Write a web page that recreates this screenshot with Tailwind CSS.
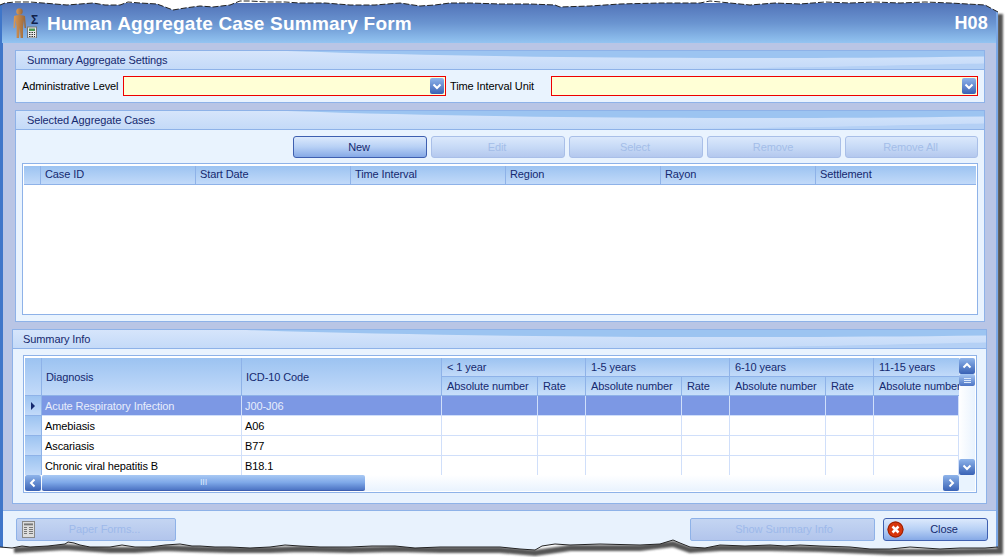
<!DOCTYPE html>
<html lang="en">
<head>
  <meta charset="UTF-8" />
  <title>Human Aggregate Case Summary Form</title>
  <script src="https://cdn.jsdelivr.net/npm/@tailwindcss/browser@4"></script>
</head>
<body class="bg-white overflow-hidden font-['Liberation_Sans',sans-serif] text-[11px] leading-none tracking-[-0.1px]">
<div class="relative w-[1006px] h-[557px] overflow-hidden bg-white pt-[3px]">

  <!-- window -->
  <div class="w-[998px] h-[549px] flex flex-col bg-[#b9c5e5] border-l-[3px] border-l-[#3f76c9] border-r-2 border-r-[#7ba8e6]">

    <!-- title bar -->
    <div class="h-[40px] shrink-0 -ml-px flex items-center justify-between bg-gradient-to-b from-[#5273b8] via-[#6a94d0] to-[#93c4f1] pr-[8px]">
      <div class="flex items-center">
        <svg width="30" height="32" viewBox="0 0 30 32" class="ml-[10px] -mt-[2px] shrink-0">
          <defs><linearGradient id="skin" x1="0" x2="1" y1="0" y2="0"><stop offset="0" stop-color="#dc9a55"/><stop offset="1" stop-color="#96653a"/></linearGradient></defs>
          <circle cx="7.500" cy="5.500" r="3.200" fill="url(#skin)"/>
          <path d="M2 10 Q7.500 8 13 10 L14 22 L12.500 22 L12 14 L11 21 L11 32 L8.600 32 L7.800 22 L7 32 L4.600 32 L4.600 21 L3.600 14 L3 22 L1.500 22 Z" fill="url(#skin)"/>
          <rect x="15.500" y="21" width="9" height="11" fill="#e8e8e8" stroke="#777"/>
          <rect x="17" y="22.500" width="6" height="2.500" fill="#4b9a55"/>
          <path d="M17 26.500h1.500M19.500 26.500h1.500M22 26.500h1M17 28.500h1.500M19.500 28.500h1.500M22 28.500h1M17 30.500h1.500M19.500 30.500h1.500M22 30.500h1" stroke="#333" stroke-width="1"/>
        </svg>
        <span class="-ml-[11px] -mt-[6px] w-[9px] text-[12px] font-bold text-[#10204a]">Σ</span>
        <span class="ml-[7px] text-[19px] font-bold text-white tracking-[0.2px]">Human Aggregate Case Summary Form</span>
      </div>
      <span class="text-[18px] font-bold text-white tracking-[0.2px]">H08</span>
    </div>

    <!-- panels -->
    <div class="flex-1 flex flex-col pt-[7px]">

      <!-- Summary Aggregate Settings -->
      <section class="ml-[12px] w-[970px] h-[53px] border border-[#8eb2e8] bg-[#e9f3fe]">
        <div class="relative h-[19px] border-b border-[#8eb2e8] bg-gradient-to-b from-[#d6e5fb] to-[#c4daf8] flex items-center pl-[11px] text-[#15296f] overflow-hidden">
          <svg class="absolute inset-0 w-full h-full" viewBox="0 0 100 20" preserveAspectRatio="none"><path d="M28 0 C48 7 70 10 100 6 L100 0 Z" fill="#9cc4f1"/><path d="M70 20 C85 18 95 15 100 14 L100 20 Z" fill="#b4d0f5"/></svg>
          <span class="relative">Summary Aggregate Settings</span>
        </div>
        <div class="h-[32px] flex items-center pl-[6px]">
          <span class="w-[101px] shrink-0 pt-px text-black">Administrative Level</span>
          <div class="w-[323px] h-[20px] border border-[#ee0000] bg-[#ffffd6] flex items-center justify-end pr-px">
            <svg width="14" height="16" viewBox="0 0 14 16"><defs><linearGradient id="dd" x1="0" x2="0" y1="0" y2="1"><stop offset="0" stop-color="#8fb4ea"/><stop offset="1" stop-color="#3a62b5"/></linearGradient></defs><rect width="14" height="16" rx="2" fill="url(#dd)"/><path d="M3.500 6.500L7 10L10.500 6.500" fill="none" stroke="#fff" stroke-width="2"/></svg>
          </div>
          <span class="w-[101px] shrink-0 ml-[4px] pt-px text-black">Time Interval Unit</span>
          <div class="w-[427px] h-[20px] border border-[#ee0000] bg-[#ffffd6] flex items-center justify-end pr-px">
            <svg width="14" height="16" viewBox="0 0 14 16"><rect width="14" height="16" rx="2" fill="url(#dd)"/><path d="M3.500 6.500L7 10L10.500 6.500" fill="none" stroke="#fff" stroke-width="2"/></svg>
          </div>
        </div>
      </section>

      <!-- Selected Aggregate Cases -->
      <section class="ml-[12px] mt-[7px] w-[970px] h-[212px] border border-[#8eb2e8] bg-[#e9f3fe]">
        <div class="relative h-[19px] border-b border-[#8eb2e8] bg-gradient-to-b from-[#d6e5fb] to-[#c4daf8] flex items-center pl-[11px] text-[#15296f] overflow-hidden">
          <svg class="absolute inset-0 w-full h-full" viewBox="0 0 100 20" preserveAspectRatio="none"><path d="M28 0 C48 7 70 10 100 6 L100 0 Z" fill="#9cc4f1"/><path d="M70 20 C85 18 95 15 100 14 L100 20 Z" fill="#b4d0f5"/></svg>
          <span class="relative">Selected Aggregate Cases</span>
        </div>
        <div class="flex justify-end gap-[4px] pt-[6px] pr-[6px]">
          <button class="w-[134px] h-[22px] pr-[2px] rounded-[3px] border border-[#3e5fb0] bg-gradient-to-b from-[#dce9fc] via-[#b7d0f5] to-[#86a9e6] text-[#15296f]">New</button>
          <button class="w-[134px] h-[22px] pr-[2px] rounded-[3px] border border-[#a9bfe8] bg-gradient-to-b from-[#dbe8fb] via-[#c7daf6] to-[#b4c8ee] text-[#a3bde8]">Edit</button>
          <button class="w-[134px] h-[22px] pr-[2px] rounded-[3px] border border-[#a9bfe8] bg-gradient-to-b from-[#dbe8fb] via-[#c7daf6] to-[#b4c8ee] text-[#a3bde8]">Select</button>
          <button class="w-[134px] h-[22px] pr-[2px] rounded-[3px] border border-[#a9bfe8] bg-gradient-to-b from-[#dbe8fb] via-[#c7daf6] to-[#b4c8ee] text-[#a3bde8]">Remove</button>
          <button class="w-[133px] h-[22px] pr-[2px] rounded-[3px] border border-[#a9bfe8] bg-gradient-to-b from-[#dbe8fb] via-[#c7daf6] to-[#b4c8ee] text-[#a3bde8]">Remove All</button>
        </div>
        <div class="ml-[6px] mt-[5px] w-[956px] h-[152px] border border-[#8eb2e8] bg-white p-px pt-[2px]">
          <div class="grid grid-cols-[17px_155px_155px_155px_155px_155px_160px] h-[19px] text-[#15296f] border-b border-[#8eb2e8]">
            <div class="bg-gradient-to-b from-[#9cc3f1] to-[#c2daf9] border-r border-[#8eb2e8]"></div>
            <div class="bg-gradient-to-b from-[#9cc3f1] to-[#c2daf9] border-r border-[#8eb2e8] pl-[4px] pb-px flex items-center">Case ID</div>
            <div class="bg-gradient-to-b from-[#9cc3f1] to-[#c2daf9] border-r border-[#8eb2e8] pl-[4px] pb-px flex items-center">Start Date</div>
            <div class="bg-gradient-to-b from-[#9cc3f1] to-[#c2daf9] border-r border-[#8eb2e8] pl-[4px] pb-px flex items-center">Time Interval</div>
            <div class="bg-gradient-to-b from-[#9cc3f1] to-[#c2daf9] border-r border-[#8eb2e8] pl-[4px] pb-px flex items-center">Region</div>
            <div class="bg-gradient-to-b from-[#9cc3f1] to-[#c2daf9] border-r border-[#8eb2e8] pl-[4px] pb-px flex items-center">Rayon</div>
            <div class="bg-gradient-to-b from-[#9cc3f1] to-[#c2daf9] pl-[4px] pb-px flex items-center">Settlement</div>
          </div>
        </div>
      </section>

      <!-- Summary Info -->
      <section class="ml-[9px] mt-[7px] w-[975px] h-[175px] border border-[#8eb2e8] bg-[#e9f3fe]">
        <div class="relative h-[19px] border-b border-[#8eb2e8] bg-gradient-to-b from-[#d6e5fb] to-[#c4daf8] flex items-center pl-[10px] text-[#15296f] overflow-hidden">
          <svg class="absolute inset-0 w-full h-full" viewBox="0 0 100 20" preserveAspectRatio="none"><path d="M24 0 C44 7 70 10 100 6 L100 0 Z" fill="#9cc4f1"/><path d="M70 20 C85 18 95 15 100 14 L100 20 Z" fill="#b4d0f5"/></svg>
          <span class="relative">Summary Info</span>
        </div>
        <div class="ml-[10px] mt-[6px] w-[954px] h-[138px] border border-[#8eb2e8] bg-white pt-[2px] pb-px pl-px flex">
          <div class="w-[934px] shrink-0">
            <div class="grid grid-cols-[17px_200px_200px_96px_48px_96px_48px_96px_48px_85px] grid-rows-[19px_19px] text-[#15296f] overflow-hidden">
              <div class="row-span-2 bg-gradient-to-b from-[#9cc3f1] to-[#c2daf9] border-r border-b border-[#8eb2e8]"></div>
              <div class="row-span-2 bg-gradient-to-b from-[#9cc3f1] to-[#c2daf9] border-r border-b border-[#8eb2e8] pl-[4px] pt-[2px] flex items-center">Diagnosis</div>
              <div class="row-span-2 bg-gradient-to-b from-[#9cc3f1] to-[#c2daf9] border-r border-b border-[#8eb2e8] pl-[4px] pt-[2px] flex items-center">ICD-10 Code</div>
              <div class="col-span-2 bg-gradient-to-b from-[#9cc3f1] to-[#c2daf9] border-r border-b border-[#8eb2e8] pl-[5px] flex items-center">&lt; 1 year</div>
              <div class="col-span-2 bg-gradient-to-b from-[#9cc3f1] to-[#c2daf9] border-r border-b border-[#8eb2e8] pl-[5px] flex items-center">1-5 years</div>
              <div class="col-span-2 bg-gradient-to-b from-[#9cc3f1] to-[#c2daf9] border-r border-b border-[#8eb2e8] pl-[5px] flex items-center">6-10 years</div>
              <div class="bg-gradient-to-b from-[#9cc3f1] to-[#c2daf9] border-b border-[#8eb2e8] pl-[5px] flex items-center">11-15 years</div>
              <div class="bg-gradient-to-b from-[#a8cbf4] to-[#c8dffa] border-r border-b border-[#8eb2e8] pl-[5px] flex items-center whitespace-nowrap">Absolute number</div>
              <div class="bg-gradient-to-b from-[#a8cbf4] to-[#c8dffa] border-r border-b border-[#8eb2e8] pl-[5px] flex items-center">Rate</div>
              <div class="bg-gradient-to-b from-[#a8cbf4] to-[#c8dffa] border-r border-b border-[#8eb2e8] pl-[5px] flex items-center whitespace-nowrap">Absolute number</div>
              <div class="bg-gradient-to-b from-[#a8cbf4] to-[#c8dffa] border-r border-b border-[#8eb2e8] pl-[5px] flex items-center">Rate</div>
              <div class="bg-gradient-to-b from-[#a8cbf4] to-[#c8dffa] border-r border-b border-[#8eb2e8] pl-[5px] flex items-center whitespace-nowrap">Absolute number</div>
              <div class="bg-gradient-to-b from-[#a8cbf4] to-[#c8dffa] border-r border-b border-[#8eb2e8] pl-[5px] flex items-center">Rate</div>
              <div class="bg-gradient-to-b from-[#a8cbf4] to-[#c8dffa] border-b border-[#8eb2e8] pl-[5px] flex items-center whitespace-nowrap overflow-hidden">Absolute number</div>
            </div>
            <div id="rows" class="h-[79px] overflow-hidden"></div>
            <!-- horizontal scroll -->
            <div class="h-[16px] flex bg-gradient-to-b from-white to-[#e9f3fe]">
              <button class="w-[16px] h-[16px] rounded-[2px] bg-gradient-to-b from-[#8fb4ea] to-[#3a62b5] flex items-center justify-center"><svg width="10" height="10" viewBox="0 0 10 10"><path d="M6.500 1.500L3 5L6.500 8.500" fill="none" stroke="#fff" stroke-width="2"/></svg></button>
              <div class="ml-px w-[323px] h-[16px] rounded-[2px] border-b border-[#3e5fb0] bg-gradient-to-b from-[#a9c9f4] via-[#7ea8e8] to-[#4d74c4] text-center text-[#dbe8fb] text-[9px] leading-[15px]">III</div>
              <div class="flex-1"></div>
              <button class="w-[16px] h-[16px] rounded-[2px] bg-gradient-to-b from-[#8fb4ea] to-[#3a62b5] flex items-center justify-center"><svg width="10" height="10" viewBox="0 0 10 10"><path d="M3.500 1.500L7 5L3.500 8.500" fill="none" stroke="#fff" stroke-width="2"/></svg></button>
            </div>
          </div>
          <!-- vertical scroll -->
          <div class="w-[16px] flex flex-col">
            <button class="w-[16px] h-[16px] rounded-[2px] bg-gradient-to-b from-[#8fb4ea] to-[#3a62b5] flex items-center justify-center shrink-0"><svg width="10" height="10" viewBox="0 0 10 10"><path d="M1.500 6.500L5 3L8.500 6.500" fill="none" stroke="#fff" stroke-width="2"/></svg></button>
            <div class="w-[16px] h-[12px] rounded-[2px] bg-gradient-to-b from-[#a9c9f4] to-[#4d74c4] flex flex-col items-center justify-center gap-px shrink-0"><i class="block w-[7px] h-px bg-[#dbe8fb]"></i><i class="block w-[7px] h-px bg-[#dbe8fb]"></i><i class="block w-[7px] h-px bg-[#dbe8fb]"></i></div>
            <div class="h-[73px] shrink-0 bg-gradient-to-r from-white to-[#e9f3fe]"></div>
            <button class="w-[16px] h-[16px] rounded-[2px] bg-gradient-to-b from-[#8fb4ea] to-[#3a62b5] flex items-center justify-center shrink-0"><svg width="10" height="10" viewBox="0 0 10 10"><path d="M1.500 3.500L5 7L8.500 3.500" fill="none" stroke="#fff" stroke-width="2"/></svg></button>
            <div class="flex-1 bg-[#e9f3fe]"></div>
          </div>
        </div>
      </section>

      <!-- footer -->
      <div class="mt-[6px] flex-1 border-t border-[#8eb2e8] bg-[#e8f2fd] flex justify-between pt-[7px] pl-[13px] pr-[8px]">
        <button class="relative w-[160px] h-[23px] rounded-[2px] border border-[#8eb2e8] bg-gradient-to-b from-[#c4d5f2] to-[#b2c5ec] text-[#9db9ea] pl-[17px]">
          <svg class="absolute left-[5px] top-[2px]" width="13" height="17" viewBox="0 0 13 17"><rect x=".5" y=".5" width="12" height="16" fill="#ddd" stroke="#888"/><path d="M2 3h9M2 3.800h9" stroke="#666"/><path d="M2 6.500h3M7 6.500h4M2 8.500h3M7 8.500h4M2 10.500h3M7 10.500h4M2 12.500h3M7 12.500h4" stroke="#777"/></svg>
          Paper Forms...
        </button>
        <div class="flex gap-[8px]">
          <button class="w-[185px] h-[23px] pl-[3px] rounded-[2px] border border-[#8eb2e8] bg-gradient-to-b from-[#c4d5f2] to-[#b2c5ec] text-[#9db9ea]">Show Summary Info</button>
          <button class="relative w-[105px] h-[23px] rounded-[3px] border border-[#3e5fb0] bg-gradient-to-b from-[#dce9fc] via-[#b7d0f5] to-[#86a9e6] text-[#15296f] pl-[17px]">
            <svg class="absolute left-[3px] top-[2px]" width="17" height="17" viewBox="0 0 17 17"><circle cx="8.500" cy="8.500" r="8" fill="#d8350c"/><circle cx="8.500" cy="8.500" r="7.500" fill="none" stroke="#8f2006" stroke-width="1"/><path d="M5.500 5.500L11.500 11.500M11.500 5.500L5.500 11.500" stroke="#fff" stroke-width="2.500"/></svg>
            Close
          </button>
        </div>
      </div>
    </div>
  </div>

  <!-- torn paper edges of the screenshot -->
  <svg class="absolute inset-0 pointer-events-none" width="1006" height="557" viewBox="0 0 1006 557">
    <defs>
      <filter id="soft"><feGaussianBlur stdDeviation="1.200"/></filter>
      <clipPath id="belowEdge"><path d="M0 547 L12 548 L22 546 L30 547 L48 546 L65 544 L68 542 L74 543 L80 545 L90 547 L110 547 L122 545 L135 547 L150 547 L165 545 L180 544 L192 546 L200 546 L215 547 L230 547 L250 548 L270 547 L285 545 L300 546 L320 547 L350 547 L372 546 L395 546 L415 548 L440 547 L470 547 L500 547 L520 549 L535 550 L542 546 L555 544 L570 545 L600 544 L640 545 L660 544 L673 540 L680 543 L690 547 L705 548 L720 545 L745 546 L770 545 L785 546 L800 545 L820 546 L850 547 L870 549 L890 549 L910 547 L940 549 L960 548 L985 548 L998 547 L998 0 L1006 0 L1006 557 L0 557 Z"/></clipPath>
    </defs>
    <path d="M0 547 L12 548 L22 546 L30 547 L48 546 L65 544 L68 542 L74 543 L80 545 L90 547 L110 547 L122 545 L135 547 L150 547 L165 545 L180 544 L192 546 L200 546 L215 547 L230 547 L250 548 L270 547 L285 545 L300 546 L320 547 L350 547 L372 546 L395 546 L415 548 L440 547 L470 547 L500 547 L520 549 L535 550 L542 546 L555 544 L570 545 L600 544 L640 545 L660 544 L673 540 L680 543 L690 547 L705 548 L720 545 L745 546 L770 545 L785 546 L800 545 L820 546 L850 547 L870 549 L890 549 L910 547 L940 549 L960 548 L985 548 L998 547 L1006 547 L1006 557 L0 557 Z" fill="#fff"/>
    <g clip-path="url(#belowEdge)">
      <path d="M14 550 L30 549 L48 548 L65 547 L80 548 L110 550 L135 550 L165 548 L192 549 L230 550 L270 550 L300 549 L350 550 L395 549 L440 550 L500 550 L535 553 L570 548 L640 548 L673 544 L690 550 L720 548 L770 548 L820 549 L890 552 L940 552 L1000 551 L1000 14" fill="none" stroke="#555" stroke-width="6" filter="url(#soft)"/>
    </g>
    <path d="M0 0 H1006 V12 H998 L985 5 L950 3 L925 2 L900 3 L875 2 L850 3 L825 2 L800 4 L775 3 L750 5 L730 3 L710 1 L700 3 L660 3 L620 4 L590 6 L560 7 L555 5 L530 4 L500 4 L470 3 L450 3 L435 5 L420 6 L400 3 L375 5 L350 5 L325 3 L300 3 L285 2 L267 2 L250 1 L240 1 L230 5 L213 7 L200 6 L185 8 L173 10 L165 7 L157 4 L140 3 L128 2 L120 5 L105 5 L93 3 L80 4 L67 5 L55 4 L43 3 L30 2 L15 2 L5 3 L0 5 Z" fill="#fff"/>
    <path d="M998 12 L985 5 L950 3 L925 2 L900 3 L875 2 L850 3 L825 2 L800 4 L775 3 L750 5 L730 3 L710 1 L700 3 L660 3 L620 4 L590 6 L560 7 L555 5 L530 4 L500 4 L470 3 L450 3 L435 5 L420 6 L400 3 L375 5 L350 5 L325 3 L300 3 L285 2 L267 2 L250 1 L240 1 L230 5 L213 7 L200 6 L185 8 L173 10 L165 7 L157 4 L140 3 L128 2 L120 5 L105 5 L93 3 L80 4 L67 5 L55 4 L43 3 L30 2 L15 2 L5 3 L0 5" fill="none" stroke="#222" stroke-width="1" stroke-dasharray="6 2"/>
    <path d="M0 547 L12 548 L22 546 L30 547 L48 546 L65 544 L68 542 L74 543 L80 545 L90 547 L110 547 L122 545 L135 547 L150 547 L165 545 L180 544 L192 546 L200 546 L215 547 L230 547 L250 548 L270 547 L285 545 L300 546 L320 547 L350 547 L372 546 L395 546 L415 548 L440 547 L470 547 L500 547 L520 549 L535 550 L542 546 L555 544 L570 545 L600 544 L640 545 L660 544 L673 540 L680 543 L690 547 L705 548 L720 545 L745 546 L770 545 L785 546 L800 545 L820 546 L850 547 L870 549 L890 549 L910 547 L940 549 L960 548 L985 548 L998 547" fill="none" stroke="#222" stroke-width="1"/>
  </svg>
</div>

<script>
  const data = [
    ["Acute Respiratory Infection", "J00-J06"],
    ["Amebiasis", "A06"],
    ["Ascariasis", "B77"],
    ["Chronic viral hepatitis B", "B18.1"]
  ];
  const rowsEl = document.getElementById("rows");
  data.forEach((row, i) => {
    const selected = i === 0;
    const tr = document.createElement("div");
    tr.className = selected
      ? "grid grid-cols-[17px_200px_200px_96px_48px_96px_48px_96px_48px_85px] h-[20px] bg-[#7c98e4] text-[#e8eefc]"
      : "grid grid-cols-[17px_200px_200px_96px_48px_96px_48px_96px_48px_85px] h-[20px] bg-white text-black";
    const sel = document.createElement("div");
    sel.className = "bg-gradient-to-b from-[#9cc3f1] to-[#c2daf9] border-r border-b border-[#8eb2e8] flex items-center justify-center";
    if (selected) sel.innerHTML = '<svg width="6" height="8" viewBox="0 0 6 8"><path d="M1 0L5 4L1 8Z" fill="#15296f"/></svg>';
    tr.appendChild(sel);
    for (let c = 0; c < 9; c++) {
      const td = document.createElement("div");
      td.className = "border-r border-b border-[#d0dffa] pl-[3px] pt-[2px] flex items-center whitespace-nowrap";
      td.textContent = row[c] || "";
      tr.appendChild(td);
    }
    rowsEl.appendChild(tr);
  });
</script>
</body>
</html>
